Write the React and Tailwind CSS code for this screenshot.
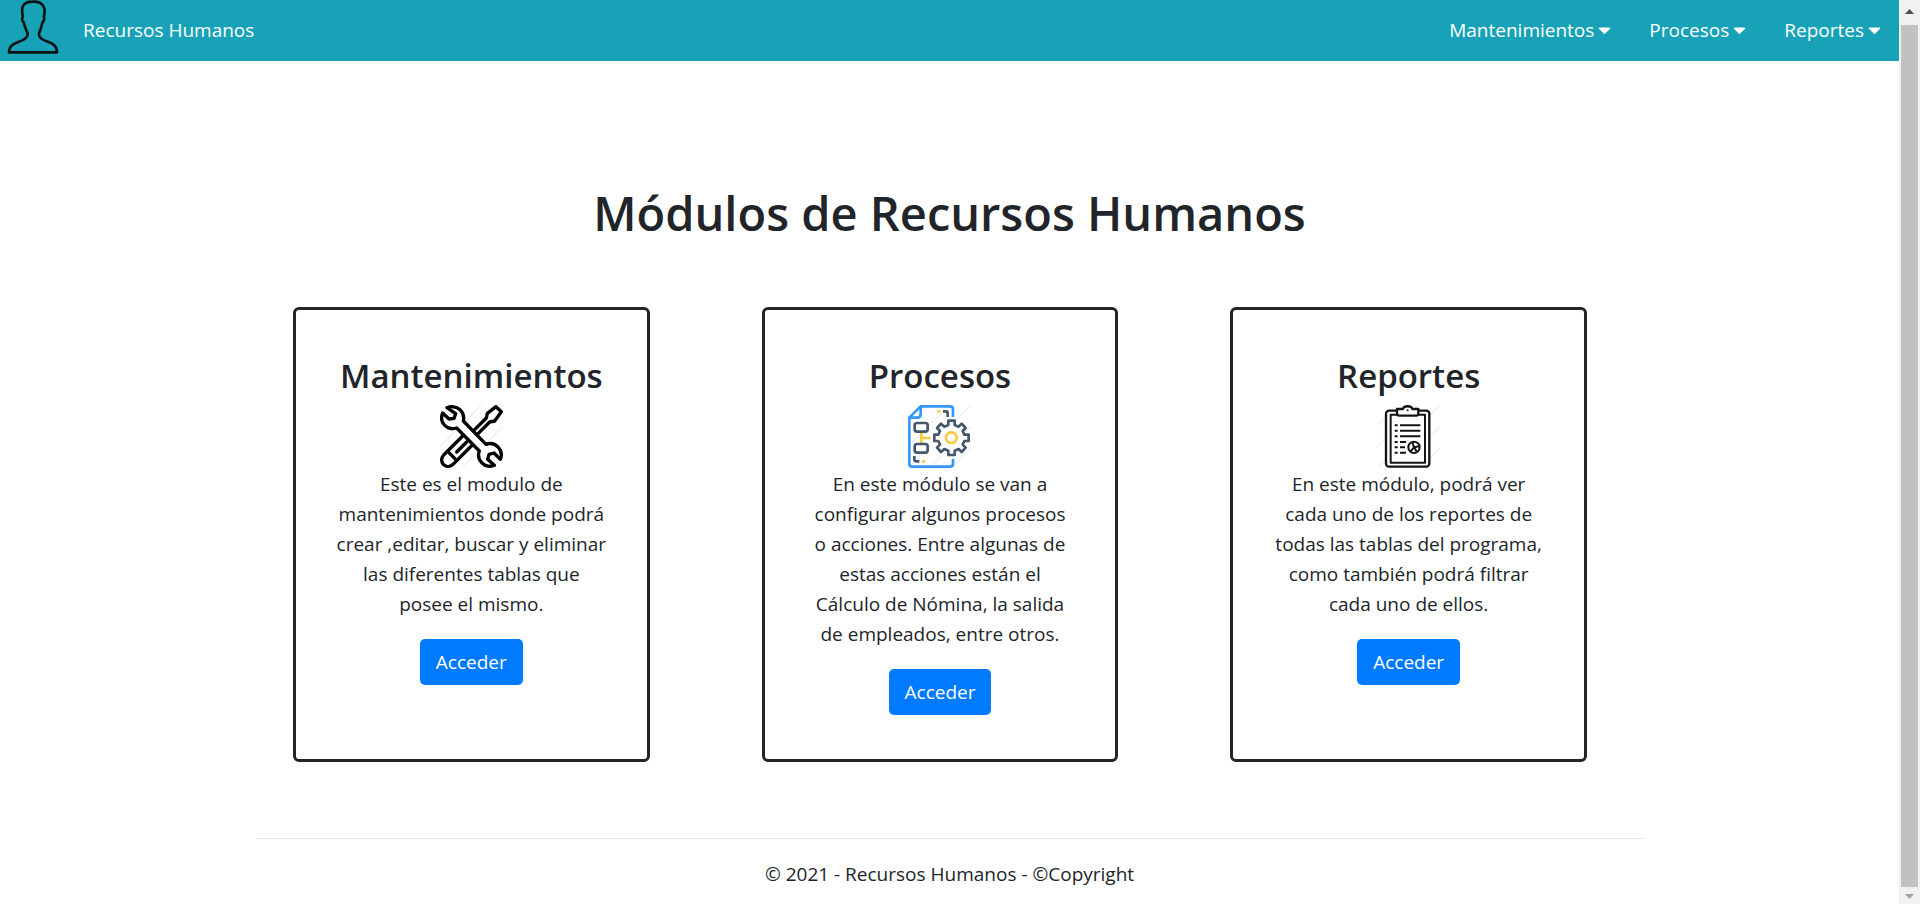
import { FaCaretDown } from "react-icons/fa";

function PersonIcon() {
  return (
    <svg viewBox="20 0 156 164" className="h-[54px] w-[52px]" fill="none" stroke="#0a1214" strokeWidth="8" strokeLinejoin="round" aria-hidden="true">
      <path d="M25 159H171C171 140 160 133 143 127C126 121 116 114 116 104C117 96 121 91 123 82C124 77 126 73 127 68C132 64 133 55 131 51C135 34 134 21 125 13C118 6 108 4 97 5C82 5 71 10 67 20C63 30 65 41 67 51C64 56 65 64 70 68C71 73 72 77 74 82C76 91 81 96 82 104C82 114 72 121 55 127C38 133 25 140 25 159Z" />
    </svg>
  );
}

function Hatching() {
  return (
    <path d="M0 60L60 0M0 125L125 0M0 189L189 0M64 189L189 64M129 189L189 129" stroke="#f0f0f0" strokeWidth="4" />
  );
}

function ToolsIcon() {
  return (
    <svg viewBox="0 0 189 189" className="size-[63px]" fill="none" stroke="#050505" strokeWidth="10" strokeLinejoin="round" strokeLinecap="round" aria-hidden="true">
      <Hatching />
      <path d="M104 74L139 39L142 25L168 5L184 20L164 48L149 51L115 85" fill="#fff" />
      <path d="M68 93L11 150C2 160 4 173 11 179C19 187 31 185 39 178L97 120" fill="#fff" />
      <path d="M23 139L50 166M80 111L50 141" />
      <path d="M21 8C32 3 49 4 60 14C70 24 73 36 70 48L138 118C151 113 165 116 175 127C184 137 186 151 181 163L162 144L147 148L143 163L163 181C152 186 136 184 126 174C116 164 113 151 118 138L50 69C37 73 22 70 13 60C4 50 3 36 8 24L27 42L42 40L47 26Z" fill="#fff" />
    </svg>
  );
}

function ProcessIcon() {
  return (
    <svg viewBox="0 0 189 189" className="size-[63px]" fill="none" strokeWidth="8" strokeLinejoin="round" aria-hidden="true">
      <Hatching />
      <path d="M135 36V13Q135 4 126 4H38L4 38V176Q4 185 13 185H126Q135 185 135 176V162" stroke="#3397fb" />
      <path d="M38 4V28Q38 38 28 38H4" stroke="#3397fb" />
      <g stroke="#fdca3c">
        <path d="M40 82V117M40 99H68" />
        <path d="M88 19H97M42 169H51" />
      </g>
      <g stroke="#45576b">
        <rect x="20" y="54" width="39" height="26" rx="7" />
        <rect x="20" y="117" width="39" height="26" rx="7" />
        <path d="M105 19H114Q119 19 119 25V36M19 153V163Q19 169 25 169H34" />
        <path d="M121 47H140V60L152 65L161 56L173 69L164 78L169 89H182V108H169L164 119L173 128L161 141L152 132L140 137V150H121V137L109 132L99 141L87 128L96 119L91 108H79V89H91L96 78L87 69L99 56L109 65L121 60Z" fill="#fff" />
        <circle cx="130" cy="98" r="16" stroke="#fdca3c" />
      </g>
    </svg>
  );
}

function ReportIcon() {
  return (
    <svg viewBox="0 0 189 189" className="size-[63px]" fill="none" stroke="#141414" strokeWidth="7" strokeLinejoin="round" aria-hidden="true">
      <Hatching />
      <rect x="27" y="17" width="130" height="168" rx="9" fill="#fff" />
      <rect x="41" y="29" width="103" height="144" strokeWidth="6" fill="#fff" />
      <path d="M60 12H78C80 1 104 1 106 12H124V25Q124 32 117 32H67Q60 32 60 25Z" fill="#fff" />
      <circle cx="92" cy="16" r="3" fill="#141414" stroke="none" />
      <g strokeWidth="6">
        <path d="M69 61H130M69 77H130M69 94H130M69 111H87M69 127H84M69 143H87" />
        <path d="M53 61H62M53 77H62M53 94H62M53 111H62M53 127H62M53 143H62" />
        <circle cx="111" cy="127" r="17" />
        <path d="M106 111L111 127L100 140M111 127L127 124M111 127L120 141" />
      </g>
    </svg>
  );
}

const menus = ["Mantenimientos", "Procesos", "Reportes"];

const modules = [
  {
    title: "Mantenimientos",
    Icon: ToolsIcon,
    text: "Este es el modulo de mantenimientos donde podrá crear ,editar, buscar y eliminar las diferentes tablas que posee el mismo.",
  },
  {
    title: "Procesos",
    Icon: ProcessIcon,
    text: "En este módulo se van a configurar algunos procesos o\u00a0acciones. Entre algunas de estas acciones están el Cálculo\u00a0de Nómina, la salida de\u00a0empleados, entre otros.",
  },
  {
    title: "Reportes",
    Icon: ReportIcon,
    text: "En este módulo, podrá ver cada uno de los reportes de todas las tablas del programa, como también podrá filtrar cada uno de ellos.",
  },
];

function ModuleCard({ title, Icon, text }) {
  return (
    <article className="flex flex-col items-center rounded-md border-3 border-[#212529] px-10 pt-[42px] pb-11 text-center">
      <h2 className="mb-[5px] text-[33px] leading-12 font-semibold">{title}</h2>
      <Icon />
      <p className="mt-px mb-5">{text}</p>
      <button type="button" className="rounded-[5px] bg-[#007bff] px-4 py-2 text-white">
        Acceder
      </button>
    </article>
  );
}

function ScrollTrack() {
  return (
    <div className="sticky top-0 flex h-screen w-[21px] shrink-0 flex-col items-center bg-[#f1f1f1]" aria-hidden="true">
      <svg viewBox="0 0 17 25" className="h-[25px] w-[17px]">
        <path d="M4 14L8.500 9L13 14Z" fill="#505050" />
      </svg>
      <div className="w-[17px] grow bg-[#c1c1c1]" />
      <svg viewBox="0 0 17 17" className="size-[17px]">
        <path d="M4 7L8.500 12L13 7Z" fill="#a3a3a3" />
      </svg>
    </div>
  );
}

export default function App() {
  return (
    <div className="flex bg-white font-['Open_Sans','Noto_Sans',sans-serif] text-[19px] leading-[30px] text-[#212529]">
      <div className="min-w-0 grow">
        <header className="flex items-start justify-between bg-[#17a2b8] pr-[18px] pb-[7px] pl-[7px] text-white">
          <a href="#inicio" className="flex items-center gap-6">
            <PersonIcon />
            <span className="pt-1.5">Recursos Humanos</span>
          </a>
          <nav className="flex gap-[38px] pt-[15px]">
            {menus.map((name) => (
              <button key={name} type="button" className="flex items-center gap-1">
                {name}
                <FaCaretDown className="h-5 w-[13px]" />
              </button>
            ))}
          </nav>
        </header>

        <div className="mx-auto max-w-[1387px]">
          <main>
            <h1 className="pt-[122px] text-center text-[47px] leading-[60px] font-semibold">Módulos de Recursos Humanos</h1>
            <section className="mt-16 grid grid-cols-3 gap-28 pr-14 pl-[37px]">
              {modules.map((module) => (
                <ModuleCard key={module.title} {...module} />
              ))}
            </section>
          </main>
          <footer className="mt-[76px] border-t border-[#e5e5e5] pt-5 text-center">
            <p>© 2021 - Recursos Humanos - ©Copyright</p>
          </footer>
        </div>
      </div>
      <ScrollTrack />
    </div>
  );
}
